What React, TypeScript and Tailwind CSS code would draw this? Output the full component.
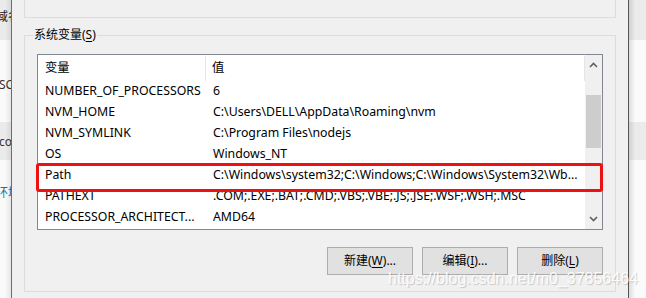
import React from "react";

const rows: [string, string][] = [
  ["NUMBER_OF_PROCESSORS", "6"],
  ["NVM_HOME", "C:\\Users\\DELL\\AppData\\Roaming\\nvm"],
  ["NVM_SYMLINK", "C:\\Program Files\\nodejs"],
  ["OS", "Windows_NT"],
  ["Path", "C:\\Windows\\system32;C:\\Windows;C:\\Windows\\System32\\Wb..."],
  ["PATHEXT", ".COM;.EXE;.BAT;.CMD;.VBS;.VBE;.JS;.JSE;.WSF;.WSH;.MSC"],
  ["PROCESSOR_ARCHITECT...", "AMD64"],
];

const font = { fontFamily: '"Noto Sans", "Noto Sans CJK SC", sans-serif' };

function Chevron({ up }: { up?: boolean }) {
  return (
    <svg width="9" height="6" viewBox="0 0 9 6" className={up ? "" : "rotate-180"}>
      <path d="M1 5 L4.5 1.5 L8 5" fill="none" stroke="#606060" strokeWidth="1.6" />
    </svg>
  );
}

function SideStrip({ side }: { side: "left" | "right" }) {
  return (
    <div className="relative h-full flex flex-col overflow-hidden">
      <div className="h-[40px] bg-[#ebebeb] shrink-0 relative">
        {side === "left" && (
          <span className="absolute left-[-4px] top-[9px] text-[12px] leading-[16px] text-[#222] whitespace-nowrap">域名</span>
        )}
      </div>
      <div className="h-[82px] bg-[#fafafa] shrink-0 relative">
        {side === "left" && (
          <span className="absolute left-[-1px] top-[37px] text-[12px] leading-[16px] text-[#333] whitespace-nowrap">SC</span>
        )}
      </div>
      <div className="h-[38px] bg-[#ebebeb] shrink-0 relative">
        {side === "left" && (
          <span className="absolute left-[-1px] top-[12px] text-[12px] leading-[16px] text-[#333] whitespace-nowrap">co</span>
        )}
      </div>
      <div className="flex-1 bg-[#fafafa] relative">
        {side === "left" && (
          <span className="absolute left-[-4px] top-[25px] text-[12px] leading-[16px] text-[#2b6f7c] whitespace-nowrap">环境</span>
        )}
      </div>
      <div
        className={
          side === "left"
            ? "absolute inset-y-0 right-0 w-[6px] bg-gradient-to-r from-transparent to-[rgba(0,0,0,0.08)]"
            : "absolute inset-y-0 left-0 w-[6px] bg-gradient-to-l from-transparent to-[rgba(0,0,0,0.12)]"
        }
      />
    </div>
  );
}

function Btn({ label, key1, rest }: { label: string; key1: string; rest: string }) {
  return (
    <div className="w-[86px] h-[28px] bg-[#e1e1e1] border border-[#adadad] flex items-center justify-center text-[12px] text-black">
      <span>
        {label}(<span className="underline underline-offset-2">{key1}</span>){rest}
      </span>
    </div>
  );
}

export default function App() {
  return (
    <div className="relative w-[646px] h-[298px] flex overflow-hidden bg-[#f0f0f0]" style={font}>
      <div className="w-[11px] h-full shrink-0">
        <SideStrip side="left" />
      </div>
      <div className="w-px h-full bg-[#6e6e6e] shrink-0" />
      <div className="w-[616px] h-full shrink-0 bg-[#f0f0f0] px-[12px]">
        <div className="h-[18px] border-x border-b border-[#dcdcdc]" />
        <div className="relative mt-[17px] h-[257px] border border-[#dcdcdc] pl-[12px] pr-[12px] pt-[18px]">
          <span className="absolute left-[8px] top-[-9px] bg-[#f0f0f0] px-[1px] text-[12px] leading-[16px] text-black">
            系统变量(<span className="underline underline-offset-2">S</span>)
          </span>
          <div className="w-[566px] h-[176px] border border-[#828790] bg-white flex">
            <div className="flex-1 flex flex-col">
              <div className="h-[26px] flex items-center text-[12.3px] text-black shrink-0">
                <div className="w-[168px] h-[25px] flex items-center pl-[7px] border-r border-[#e5e5e5]">变量</div>
                <div className="flex-1 h-[25px] flex items-center pl-[6px] border-r border-[#e5e5e5]">值</div>
              </div>
              {rows.map(([k, v]) => (
                <div key={k} className="h-[21px] flex items-center text-[12.3px] text-black whitespace-nowrap">
                  <div className="w-[168px] pl-[7px] overflow-hidden">{k}</div>
                  <div className="flex-1 pl-[7px] overflow-hidden">{v}</div>
                </div>
              ))}
            </div>
            <div className="w-[17px] h-full bg-[#f0f0f0] flex flex-col items-center shrink-0">
              <div className="h-[20px] w-full flex items-center justify-center">
                <Chevron up />
              </div>
              <div className="mt-[20px] w-[15px] h-[53px] bg-[#cdcdcd]" />
              <div className="flex-1" />
              <div className="h-[20px] w-full flex items-center justify-center">
                <Chevron />
              </div>
            </div>
          </div>
          <div className="mt-[17px] flex justify-end gap-[9px] w-[566px]">
            <Btn label="新建" key1="W" rest="..." />
            <Btn label="编辑" key1="I" rest="..." />
            <Btn label="删除" key1="L" rest="" />
          </div>
          <div className="absolute left-[11px] top-[127px] w-[567px] h-[29px] border-[3px] border-[#ee1111] rounded-[3px] pointer-events-none" />
        </div>
      </div>
      <div className="w-px h-full bg-[#555555] shrink-0" />
      <div className="flex-1 h-full">
        <SideStrip side="right" />
      </div>
      <div
        className="absolute left-[388px] top-[270px] text-[16px] leading-[18px] whitespace-nowrap text-[rgba(255,255,255,0.9)] [text-shadow:1px_1px_1px_rgba(0,0,0,0.18)]"
        style={{ fontFamily: '"Liberation Sans", Arial, sans-serif' }}
      >
        https://blog.csdn.net/m0_37856464
      </div>
    </div>
  );
}
